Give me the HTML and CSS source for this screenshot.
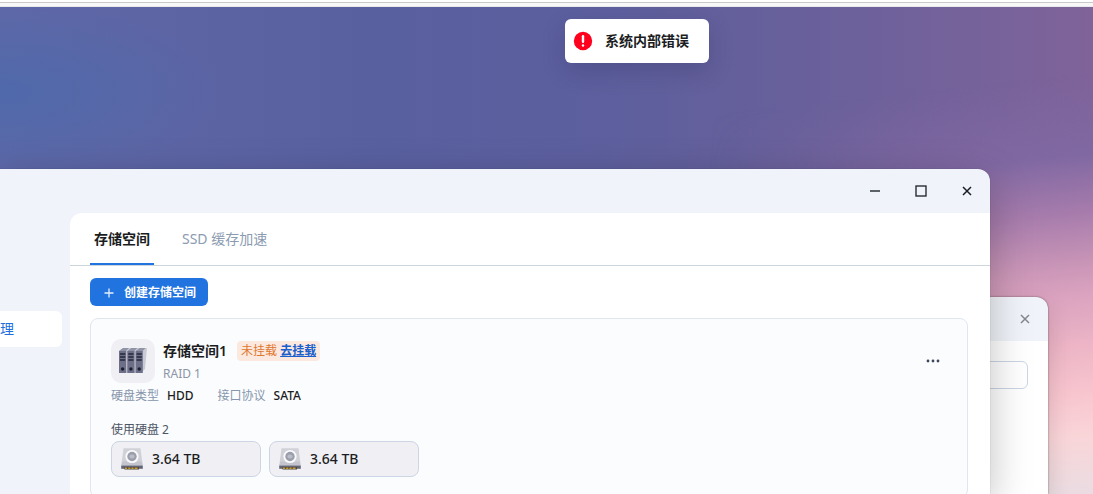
FILE: index.html
```html
<!DOCTYPE html>
<html lang="zh-CN">
<head>
<meta charset="utf-8">
<title>存储空间</title>
<link rel="stylesheet" href="styles.css">
</head>
<body>
<svg class="defs" aria-hidden="true">
  <symbol id="close" viewBox="0 0 10 10"><path d="M1 1l8 8M9 1l-8 8" stroke="currentColor" stroke-width="1.5" fill="none"/></symbol>
  <symbol id="disk" viewBox="0 0 22 22">
    <path d="M2.500 .3h17L21.700 17H.3z" fill="#d0d0d8"/>
    <path d="M1.300 13.500h19.400l1 4H.3z" fill="#c3c4ce"/>
    <circle cx="11" cy="8.500" r="6.600" fill="#fafafc"/>
    <circle cx="11" cy="8.500" r="4.700" fill="#9b9eac"/>
    <ellipse cx="11" cy="8.500" rx="2.600" ry="2" fill="#babdc8"/>
    <path d="M.2 17.500h21.600v3.300H.2z" fill="#636476"/>
    <path d="M3.500 19h14.500v2.500H3.500z" fill="#4c4540"/>
    <path d="M4 20.300h2.200m1 0h2.200m1 0h2.200m1 0h3" stroke="#c79c32" stroke-width="1.500"/>
  </symbol>
</svg>
<div class="chrome-edge"></div>
<main class="desktop">
  <section class="window window-back">
    <header class="titlebar">
      <button class="win-btn" aria-label="关闭"><svg width="10" height="10"><use href="#close"/></svg></button>
    </header>
    <div class="back-body"><input class="field" type="text" aria-label="输入"></div>
  </section>

  <section class="window window-main">
    <header class="titlebar">
      <button class="win-btn" aria-label="最小化"><svg width="12" height="12" viewBox="0 0 12 12"><path d="M1 6h10" stroke="#5d6269" stroke-width="2"/></svg></button>
      <button class="win-btn" aria-label="最大化"><svg width="12" height="12" viewBox="0 0 12 12"><rect x="1" y="1" width="10" height="10" fill="none" stroke="currentColor" stroke-width="1.300"/></svg></button>
      <button class="win-btn" aria-label="关闭"><svg width="10" height="10"><use href="#close"/></svg></button>
    </header>
    <div class="window-body">
      <nav class="sidebar"><a class="side-item" href="#">理</a></nav>
      <div class="panel">
        <div class="tabs" role="tablist">
          <button class="tab tab-active" role="tab" aria-selected="true">存储空间</button>
          <button class="tab" role="tab" aria-selected="false">SSD 缓存加速</button>
        </div>
        <div class="content">
          <button class="create"><svg width="10" height="10" viewBox="0 0 10 10"><path d="M5 .5v9M.5 5h9" stroke="#e6effc" stroke-width="1.300"/></svg>创建存储空间</button>
          <article class="card">
            <div class="card-head">
              <div class="pool-icon">
                <svg width="28" height="28" viewBox="0 0 28 28" aria-hidden="true">
                  <path d="M0 4l4-3h24l-2 21-4 4H0z" fill="#c9cad4"/>
                  <path d="M0 4l4-3h6L7 4zM8.300 4l4-3h6l-3 3zM16.600 4l4-3h6l-3 3z" fill="#9093a6"/>
                  <path d="M0 4h7.200v22H0zM8.300 4h7.200v22H8.300zM16.600 4h7.200v22h-7.200z" fill="#6c6f87"/>
                  <path d="M1 7h5.200M1 10h5.200M1 13h5.200M9.300 7h5.200m-5.200 3h5.200m-5.200 3h5.200M17.600 7h5.200m-5.200 3h5.200m-5.200 3h5.200" stroke="#25273b" stroke-width="1.300"/>
                  <g fill="#1c1e31"><circle cx="3.600" cy="22" r="1.700"/><circle cx="11.900" cy="22" r="1.700"/><circle cx="20.200" cy="22" r="1.700"/></g>
                </svg>
              </div>
              <div class="pool-text">
                <div class="pool-line">
                  <h2 class="pool-name">存储空间1</h2>
                  <span class="badge">未挂载 <a class="mount" href="#">去挂载</a></span>
                </div>
                <div class="pool-raid">RAID 1</div>
              </div>
              <button class="more" aria-label="更多"><svg width="14" height="4" viewBox="0 0 14 4" fill="currentColor"><circle cx="2" cy="2" r="1.400"/><circle cx="7" cy="2" r="1.400"/><circle cx="12" cy="2" r="1.400"/></svg></button>
            </div>
            <dl class="meta">
              <div class="pair"><dt>硬盘类型</dt><dd>HDD</dd></div>
              <div class="pair"><dt>接口协议</dt><dd>SATA</dd></div>
            </dl>
            <div class="disk-title">使用硬盘 2</div>
            <div class="disks">
              <div class="disk"><svg width="22" height="22"><use href="#disk"/></svg>3.64 TB</div>
              <div class="disk"><svg width="22" height="22"><use href="#disk"/></svg>3.64 TB</div>
            </div>
          </article>
        </div>
      </div>
    </div>
  </section>

  <div class="toast" role="alert">
    <svg width="20" height="20" viewBox="0 0 20 20" aria-hidden="true"><circle cx="10" cy="10" r="9.200" fill="#ff001f"/><path d="M10 5.200v5.600" stroke="#fff" stroke-width="2.400" stroke-linecap="round"/><circle cx="10" cy="14.500" r="1.200" fill="#fff"/></svg>
    系统内部错误
  </div>
</main>
</body>
</html>
```
FILE: styles.css
```css
* { box-sizing: border-box; }

body {
  margin: 0;
  height: 100vh;
  display: flex;
  flex-direction: column;
  overflow: hidden;
  font: 12px/20px "Noto Sans", "Noto Sans CJK SC", sans-serif;
  color: #1b1d22;
}

button {
  font: inherit;
  color: inherit;
  border: 0;
  padding: 0;
  background: none;
}

svg { display: block; flex: none; }
.defs { position: absolute; width: 0; height: 0; }

.chrome-edge {
  flex: none;
  height: 7px;
  background: linear-gradient(#fff 0 2px, #c9c9c9 2px 3px, #f8f8f8 3px 6px, #e9e9ec 6px);
}

.desktop {
  position: relative;
  flex: 1;
  overflow: hidden;
  background:
    radial-gradient(ellipse 220px 90px at 0 85px, #4f69aa 0%, #4f69aa00 100%),
    linear-gradient(to right, #5f68a8 0%, #5960a0 35%, #5d5f9e 55%, #67609b 72%, #75629b 88%, #7f6399 100%);
}

.desktop::before {
  content: "";
  position: absolute;
  inset: 0;
  background: linear-gradient(174deg, #7b65a100 180px, #8068a2 260px, #a77cac 318px, #c995b7 368px, #dba3bf 400px, #edb5c6 450px, #f8c6cf 500px, #f9d5d8 540px, #ecdce1 590px);
  -webkit-mask-image: linear-gradient(to right, transparent 65%, #000 90%);
  mask-image: linear-gradient(to right, transparent 65%, #000 90%);
}

.window {
  position: absolute;
  bottom: 0;
  overflow: hidden;
  background: #f0f3f9;
}

.window-main {
  top: 162px;
  left: 0;
  right: 103px;
  display: flex;
  flex-direction: column;
  border-radius: 0 12px 0 0;
  box-shadow: 0 0 1px #00000066, 0 12px 40px #00000040;
}

.window-back {
  top: 290px;
  right: 45px;
  width: 400px;
  border-radius: 12px 12px 0 0;
  box-shadow: 0 0 2px #00000080, 0 10px 24px #00000026;
}

.titlebar {
  flex: none;
  height: 44px;
  display: flex;
  justify-content: flex-end;
}

.win-btn {
  width: 46px;
  display: grid;
  place-items: center;
}

.window-back .win-btn { color: #85888d; }

.back-body {
  height: 100%;
  padding: 20px;
  background: #fff;
}

.field {
  display: block;
  width: 100%;
  height: 28px;
  border: 1px solid #cbd5e3;
  border-radius: 6px;
  background: #fff;
}

.window-body { flex: 1; display: flex; }

.sidebar {
  flex: none;
  width: 70px;
  padding: 98px 8px 0 0;
}

.side-item {
  display: flex;
  align-items: center;
  height: 36px;
  border-radius: 0 6px 6px 0;
  background: #fff;
  color: #1f6fe0;
  font-size: 14px;
  text-decoration: none;
}

.panel {
  flex: 1;
  min-width: 0;
  background: #fff;
  border-radius: 12px 0 0 0;
}

.tabs {
  display: flex;
  gap: 24px;
  height: 53px;
  padding: 0 20px;
  border-bottom: 1px solid #cbd5de;
}

.tab {
  padding: 2px 4px 0;
  border-bottom: 2px solid transparent;
  font-size: 14px;
  color: #8b9bb0;
}

.tab-active {
  color: #1b1d22;
  font-weight: 600;
  border-bottom-color: #2173df;
}

.content { padding: 12px 22px 20px 20px; }

.create {
  display: flex;
  align-items: center;
  gap: 10px;
  height: 28px;
  padding: 1px 12px 0 14px;
  border-radius: 6px;
  background: #2173df;
  color: #fff;
  font-weight: 700;
}

.card {
  margin-top: 12px;
  padding: 20px;
  border: 1px solid #e0e6ef;
  border-radius: 8px;
  background: #fbfcfe;
}

.card-head { display: flex; gap: 8px; }

.pool-icon {
  width: 44px;
  height: 44px;
  display: grid;
  place-items: center;
  border-radius: 10px;
  background: #f0f0f4;
}

.pool-text { flex: 1; }

.pool-line {
  display: flex;
  align-items: center;
  gap: 10px;
  height: 24px;
}

.pool-name { margin: 0; font-size: 14px; font-weight: 600; }

.badge {
  padding: 0 4px;
  border-radius: 4px;
  background: #fbe9df;
  color: #e0762f;
}

.mount { color: #1a60cc; font-weight: 600; }
.pool-raid { margin-top: 1px; color: #8b95a5; }

.more {
  width: 28px;
  height: 44px;
  display: grid;
  place-items: center;
  color: #3d4658;
}

.meta {
  display: flex;
  gap: 24px;
  margin: 2px 0 14px;
}

.pair { display: flex; gap: 8px; }
.meta dt { color: #8796ab; }
.meta dd { margin: 0; font-weight: 500; }
.disk-title { color: #4d5665; margin-bottom: 1px; }
.disks { display: flex; gap: 8px; }

.disk {
  display: flex;
  align-items: center;
  gap: 9px;
  width: 150px;
  height: 36px;
  padding: 0 9px;
  border: 1px solid #cbd5e3;
  border-radius: 8px;
  background: #f0f0f4;
  font-size: 14px;
  font-weight: 500;
}

.toast {
  position: absolute;
  top: 12px;
  left: 565px;
  display: flex;
  align-items: center;
  gap: 12px;
  height: 44px;
  padding: 0 20px 0 8px;
  border-radius: 6px;
  background: #fff;
  box-shadow: 0 8px 24px #1a1a4033;
  font-size: 14px;
  font-weight: 600;
}
```
